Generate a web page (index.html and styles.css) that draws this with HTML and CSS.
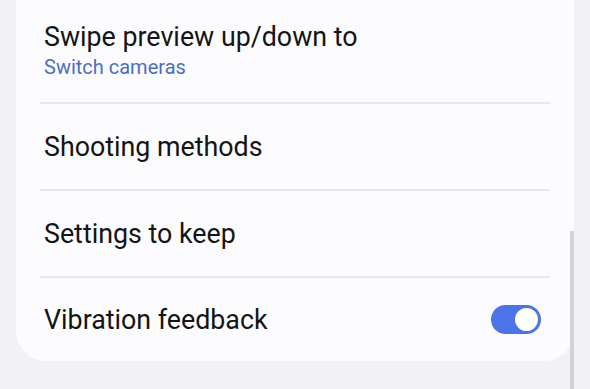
FILE: index.html
```html
<!DOCTYPE html>
<html>
<head>
<meta charset="utf-8">
<link rel="stylesheet" href="styles.css">
</head>
<body>
<div class="page">
  <div class="card">
    <div class="row row-first">
      <div class="title">Swipe preview up/down to</div>
      <div class="sub">Switch cameras</div>
    </div>
    <div class="divider"></div>
    <div class="row">
      <div class="title">Shooting methods</div>
    </div>
    <div class="divider"></div>
    <div class="row">
      <div class="title">Settings to keep</div>
    </div>
    <div class="divider"></div>
    <div class="row row-last">
      <div class="title">Vibration feedback</div>
      <div class="toggle"><div class="thumb"></div></div>
    </div>
  </div>
  <div class="scrollbar"></div>
</div>
</body>
</html>
```
FILE: styles.css
```css
html, body {
  margin: 0;
  padding: 0;
  background: #f2f2f4;
  overflow: hidden;
}
.page {
  position: relative;
  width: 590px;
  height: 389px;
  font-family: Roboto, "Noto Sans", sans-serif;
}
.card {
  margin-left: 16px;
  width: 558px;
  background: #fcfcfe;
  border-radius: 0 0 30px 30px;
  padding: 0 24px;
  box-sizing: border-box;
}
.row {
  height: 85px;
  display: flex;
  align-items: center;
  justify-content: space-between;
  padding: 0 4px;
}
.row-first {
  height: 102px;
  flex-direction: column;
  align-items: flex-start;
  justify-content: flex-start;
  padding-top: 21px;
  box-sizing: border-box;
}
.row-last {
  height: 83px;
}
.title {
  font-size: 26.8px;
  color: #141414;
  line-height: 32px;
}
.sub {
  font-size: 20px;
  color: #4a6fc4;
  line-height: 24px;
  margin-top: 2px;
}
.divider {
  height: 2px;
  background: #e8e8ea;
}
.toggle {
  width: 50px;
  height: 29px;
  border-radius: 15px;
  background: #4a74e8;
  display: flex;
  align-items: center;
  justify-content: flex-end;
  padding: 1px;
  box-sizing: border-box;
  margin-right: 5px;
}
.thumb {
  width: 27px;
  height: 27px;
  border-radius: 50%;
  background: #fff;
  border: 2.5px solid #4a74e8;
  box-sizing: border-box;
}
.scrollbar {
  position: absolute;
  left: 570px;
  top: 231px;
  width: 4px;
  height: 158px;
  background: #d2d2d4;
}
```
